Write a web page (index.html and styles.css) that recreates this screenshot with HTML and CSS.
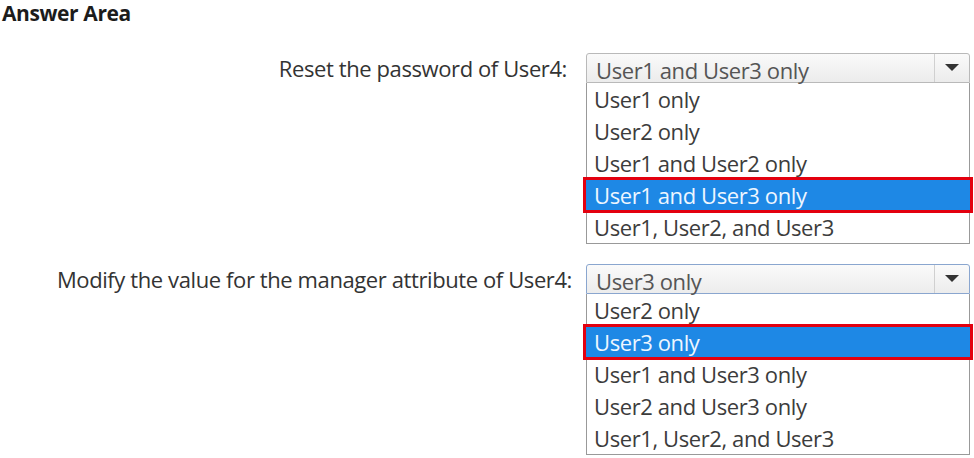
FILE: index.html
```html
<!DOCTYPE html>
<html lang="en">
<head>
  <meta charset="UTF-8">
  <title>Answer Area</title>
  <link rel="stylesheet" href="styles.css">
</head>
<body>

  <h3 class="answer-title">Answer Area</h3>

  <div class="question">
    <div class="q-label">Reset the password of User4:</div>
    <div class="combo">
      <div class="combo-head">
        <span class="combo-value">User1 and User3 only</span>
        <span class="combo-arrow"></span>
      </div>
      <ul class="combo-list">
        <li>User1 only</li>
        <li>User2 only</li>
        <li>User1 and User2 only</li>
        <li class="picked">User1 and User3 only</li>
        <li>User1, User2, and User3</li>
      </ul>
    </div>
  </div>

  <div class="question second">
    <div class="q-label">Modify the value for the manager attribute of User4:</div>
    <div class="combo focus">
      <div class="combo-head">
        <span class="combo-value">User3 only</span>
        <span class="combo-arrow"></span>
      </div>
      <ul class="combo-list">
        <li>User2 only</li>
        <li class="picked">User3 only</li>
        <li>User1 and User3 only</li>
        <li>User2 and User3 only</li>
        <li>User1, User2, and User3</li>
      </ul>
    </div>
  </div>

</body>
</html>
```

FILE: styles.css
```css
body {
  margin: 0;
  background: #fff;
  font-family: "Open Sans", "Noto Sans", sans-serif;
  color: #3a3a3a;
}
.answer-title {
  margin: 0;
  padding: 0 0 0 2px;
  font-size: 21px;
  line-height: 26px;
  font-weight: bold;
  color: #1c1c1c;
  letter-spacing: -0.4px;
}
.question {
  display: grid;
  grid-template-columns: 586px 384px;
  margin-top: 27px;
}
.question.second {
  margin-top: 20px;
}
.q-label {
  text-align: right;
  padding-right: 19px;
  font-size: 22px;
  line-height: 30px;
  letter-spacing: -0.4px;
  color: #333;
}
.second .q-label {
  padding-right: 14px;
}
.combo-head {
  display: flex;
  height: 28px;
  border: 1px solid #b9b9b9;
  border-radius: 3px 3px 0 0;
  background: linear-gradient(#fafafa, #ececec);
}
.focus .combo-head {
  border-color: #8aa6cf;
}
.combo-value {
  flex: 1;
  padding: 2px 0 0 9px;
  font-size: 22px;
  line-height: 28px;
  letter-spacing: -0.4px;
  color: #555;
  white-space: nowrap;
}
.combo-arrow {
  width: 34px;
  border-left: 1px solid #d0d0d0;
  display: flex;
  justify-content: center;
  align-items: center;
}
.combo-arrow::before {
  content: "";
  border-left: 7px solid transparent;
  border-right: 7px solid transparent;
  border-top: 7px solid #333;
  margin-top: -2px;
}
.combo-list {
  list-style: none;
  margin: 0;
  padding: 0;
  border: 1px solid #999;
  border-top: none;
}
.combo-list li {
  height: 32px;
  padding-left: 7px;
  font-size: 22px;
  line-height: 32px;
  letter-spacing: -0.4px;
  color: #3c3c3c;
  white-space: nowrap;
}
.combo-list li.picked {
  background: #1e88e5;
  color: #eef6ff;
  outline: 3px solid #e3000f;
  outline-offset: -1px;
  position: relative;
  margin: 0 -2px;
  padding-left: 9px;
}
```
